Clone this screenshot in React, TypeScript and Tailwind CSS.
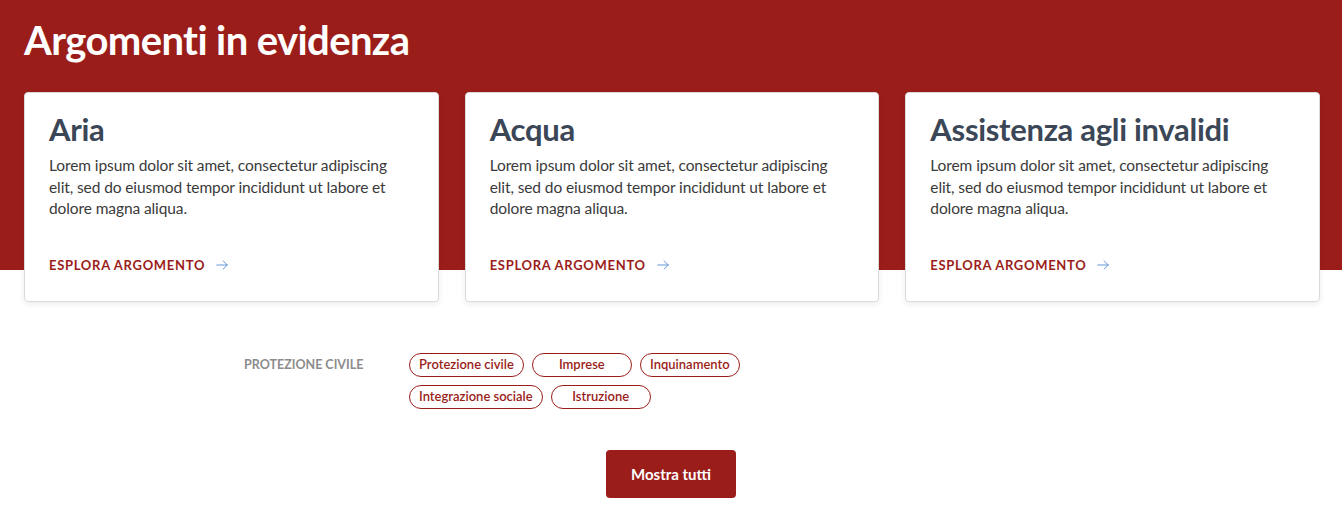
const topics = [
  { title: "Aria" },
  { title: "Acqua" },
  { title: "Assistenza agli invalidi" },
];

const tags = ["Protezione civile", "Imprese", "Inquinamento", "Integrazione sociale", "Istruzione"];

function ArrowRight() {
  return (
    <svg width="14" height="14" viewBox="0 0 24 24" fill="none" stroke="#5b8fd6" strokeWidth="1.6" strokeLinecap="round" strokeLinejoin="round">
      <path d="M3 12h18" />
      <path d="M14 5l7 7-7 7" />
    </svg>
  );
}

export default function App() {
  return (
    <main className="min-h-screen bg-white font-['Lato','Open_Sans',sans-serif]">
      <section className="bg-[linear-gradient(to_bottom,#9b1d1a_270px,#ffffff_270px)] pl-6 pr-[22px] pt-[16px]">
        <h1 className="text-[40px] font-bold leading-[48px] tracking-[-0.6px] text-white">
          Argomenti in evidenza
        </h1>

        {/* Cards */}
        <div className="mt-[28px] grid grid-cols-3 gap-[26px]">
          {topics.map((t) => (
            <div
              key={t.title}
              className="h-[210px] rounded-[4px] border border-[#d9dadb] bg-white px-[24px] pt-[14px] shadow-[0_2px_6px_rgba(0,0,0,0.08)]"
            >
              <h3 className="text-[31px] font-bold leading-[44px] tracking-[-0.3px] text-[#3b4656]">{t.title}</h3>
              <p className="mt-[4px] max-w-[345px] text-[15.5px] leading-[21.5px] tracking-[-0.1px] text-[#3a3a3a]">
                Lorem ipsum dolor sit amet, consectetur adipiscing elit, sed do eiusmod tempor incididunt ut labore et
                dolore magna aliqua.
              </p>
              <a href="#" className="mt-[36px] flex items-center gap-[10px] text-[13px] font-bold tracking-[0.7px] text-[#9b1d1a]">
                ESPLORA ARGOMENTO
                <ArrowRight />
              </a>
            </div>
          ))}
        </div>
      </section>

      {/* Tags */}
      <div className="mt-[51px] flex">
        <div className="w-[409px] shrink-0 pl-[244px] pt-[3px] text-[12.5px] font-bold text-[#8c8c8c]">
          PROTEZIONE CIVILE
        </div>
        <div className="flex w-[360px] flex-wrap gap-x-[8px] gap-y-[8px]">
          {tags.map((tag) => (
            <span
              key={tag}
              className="flex h-[24px] min-w-[100px] items-center justify-center rounded-full border border-[#9b1d1a] px-[9px] text-[13px] font-semibold text-[#9b1d1a]"
            >
              {tag}
            </span>
          ))}
        </div>
      </div>

      <div className="mt-[41px] flex justify-center">
        <button className="h-[48px] w-[130px] rounded-[4px] bg-[#9b1d1a] text-[15px] font-bold text-white">
          Mostra tutti
        </button>
      </div>
    </main>
  );
}
